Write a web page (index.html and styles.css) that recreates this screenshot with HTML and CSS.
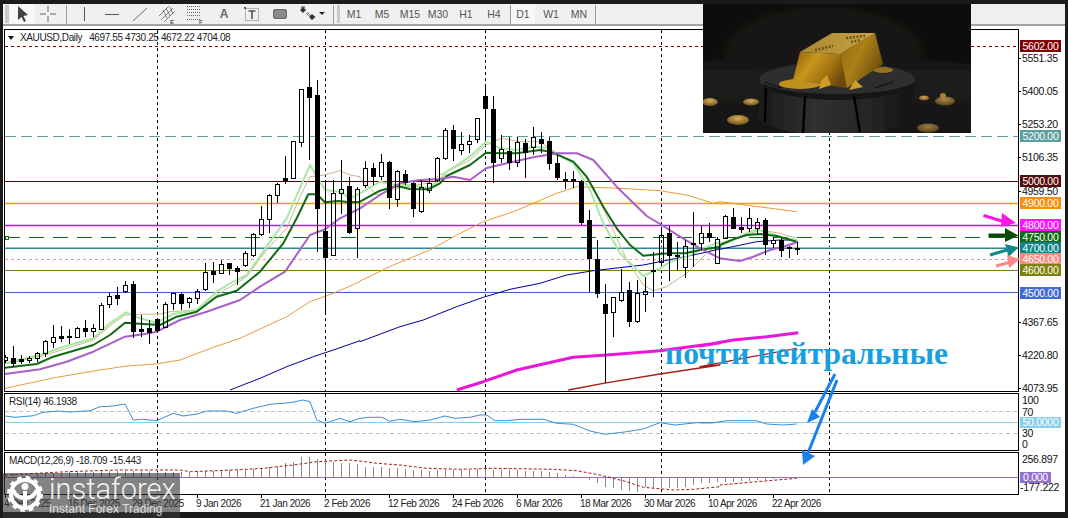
FILE: index.html
```html
<!DOCTYPE html>
<html lang="ru">
<head>
<meta charset="utf-8">
<title>XAUUSD, Daily</title>
<link rel="stylesheet" href="styles.css">
</head>
<body>
<div class="app">
  <div class="toolbar">
    <span class="grip"></span>
    <button class="tool active"><svg viewBox="0 0 20 20"><path d="M6 2 L6 16 L9.5 13 L12 18 L14 17 L11.5 12 L16 11 Z" fill="#444"/></svg></button>
    <button class="tool"><svg viewBox="0 0 20 20"><path d="M10 2V8M10 12V18M2 10H8M12 10H18" stroke="#666" fill="none"/></svg></button>
    <span class="sep"></span>
    <button class="tool"><svg viewBox="0 0 20 20"><path d="M10.5 3V17" stroke="#555" fill="none"/></svg></button>
    <button class="tool"><svg viewBox="0 0 20 20"><path d="M3 10.5H17" stroke="#555" fill="none"/></svg></button>
    <button class="tool"><svg viewBox="0 0 20 20"><path d="M3 17L17 4" stroke="#666" fill="none"/></svg></button>
    <button class="tool"><svg viewBox="0 0 20 20"><path d="M1 12L11 2M3 16L15 4M6 18L17 7M5 6L9 14M8 4L12 12M12 3L15 10" stroke="#666" stroke-width=".8" fill="none"/><text x="12" y="20" class="sub">E</text></svg></button>
    <button class="tool"><svg viewBox="0 0 20 20"><path d="M1 2.5H14M1 5.5H14M1 8.5H14M1 11.5H14M1 15.5H14" stroke="#666" stroke-dasharray="1 1" fill="none"/><text x="13" y="20" class="sub">F</text></svg></button>
    <button class="tool"><span class="letter">A</span></button>
    <button class="tool"><svg viewBox="0 0 20 20"><path d="M3.5 4.5H16.5V16.5H3.5Z" stroke="#777" stroke-dasharray="1 1" fill="none"/><rect x="2" y="3" width="2" height="2" fill="#555"/><path d="M6.5 7H13.5M10 7V15" stroke="#555" stroke-width="1.6" fill="none"/></svg></button>
    <button class="tool"><svg viewBox="0 0 20 20"><rect x="3.5" y="5.5" width="13" height="9" rx="1.5" fill="#888" stroke="#666"/></svg></button>
    <button class="tool"><svg viewBox="0 0 20 20"><path d="M5 3L8 6L5 9L2 6Z" fill="#333"/><path d="M3 3H7" stroke="#333"/><path d="M9 8L13 12M8 9L11 12" stroke="#777"/><path d="M14 10L17.500 13L14 16L11 13Z" fill="#333"/></svg></button>
    <span class="caret"></span>
    <span class="sep"></span>
    <span class="grip"></span>
    <button class="period">M1</button>
    <button class="period">M5</button>
    <button class="period">M15</button>
    <button class="period">M30</button>
    <button class="period">H1</button>
    <button class="period">H4</button>
    <span class="sep"></span>
    <button class="period active">D1</button>
    <button class="period">W1</button>
    <button class="period">MN</button>
    <span class="sep"></span>
  </div>

  <div class="workspace">
    <div class="pane pane-main">
      <div class="plot">
        <svg id="main" class="chart" width="1013" height="361" viewBox="5 30 1013 361"></svg>
        <div class="legend legend-main"><i class="legend-arrow"></i><span>XAUUSD,Daily</span><span>4697.55 4730.25 4672.22 4704.08</span></div>
      </div>
      <div class="axis">
        <span class="tag c-5602" style="top:11px">5602.00</span>
        <span class="tick" style="top:23px">5551.35</span>
        <span class="tick" style="top:56px">5400.05</span>
        <span class="tick" style="top:89px">5253.20</span>
        <span class="tag c-5200" style="top:101px">5200.00</span>
        <span class="tick" style="top:122px">5106.35</span>
        <span class="tick" style="top:156px">4959.50</span>
        <span class="tag c-5000" style="top:146px">5000.00</span>
        <span class="tag c-4900" style="top:168px">4900.00</span>
        <span class="tag c-4800" style="top:190px">4800.00</span>
        <span class="tag c-4750" style="top:202px">4750.00</span>
        <span class="tag c-4700" style="top:213px">4700.00</span>
        <span class="tag c-4650" style="top:224px">4650.00</span>
        <span class="tag c-4600" style="top:235px">4600.00</span>
        <span class="tag c-4500" style="top:258px">4500.00</span>
        <span class="tick" style="top:287px">4367.65</span>
        <span class="tick" style="top:320px">4220.80</span>
        <span class="tick" style="top:353px">4073.95</span>
      </div>
    </div>

    <div class="pane pane-rsi">
      <div class="plot">
        <svg id="rsi" class="chart" width="1013" height="56" viewBox="5 394 1013 56"></svg>
        <div class="legend legend-sub">RSI(14) 46.1938</div>
      </div>
      <div class="axis">
        <span class="plain" style="top:1px">100</span>
        <span class="plain" style="top:13px">70</span>
        <span class="tag tag-wide c-rsi" style="top:24px">50.0000</span>
        <span class="plain" style="top:34px">30</span>
        <span class="plain" style="top:45px">0</span>
      </div>
    </div>

    <div class="pane pane-macd">
      <div class="plot">
        <svg id="macd" class="chart" width="1013" height="41" viewBox="5 453 1013 41"></svg>
        <div class="legend legend-sub">MACD(12,26,9) -18.709 -15.443</div>
      </div>
      <div class="axis">
        <span class="plain" style="top:1px">256.897</span>
        <span class="tag tag-short c-macd" style="top:20px">0.000</span>
        <span class="tick tick-low" style="top:29px">-177.222</span>
      </div>
    </div>

    <div class="timeline">
      <span>4 Dec 2025</span><span>16 Dec 2025</span><span>29 Dec 2025</span><span>9 Jan 2026</span><span>21 Jan 2026</span><span>2 Feb 2026</span><span>12 Feb 2026</span><span>24 Feb 2026</span><span>6 Mar 2026</span><span>18 Mar 2026</span><span>30 Mar 2026</span><span>10 Apr 2026</span><span>22 Apr 2026</span>
    </div>
  </div>

  <svg class="annotations" width="1068" height="518" viewBox="0 0 1068 518">
    <path d="M983.500 215.500L1005 222" class="shaft s-magenta"/><path d="M1002 213L1016 223L1001 227Z" class="head h-magenta"/>
    <path d="M988.500 235.500L1007 235.500" class="shaft s-green"/><path d="M1005 228L1018.500 235.500L1005 242Z" class="head h-green"/>
    <path d="M990 255L1007 250" class="shaft s-teal"/><path d="M1005 244L1018.500 247.500L1008.500 257Z" class="head h-teal"/>
    <path d="M996 266L1011 262" class="shaft s-salmon"/><path d="M1007 255L1020 259L1009 268Z" class="head h-salmon"/>
    <path d="M835 374L815 412" class="shaft s-blue"/><path d="M807 423L812 409L820 417Z" class="head h-blue"/>
    <path d="M837 380L808 453" class="shaft s-blue"/><path d="M803 465L802 450L815 456Z" class="head h-blue"/>
  </svg>

  <div class="headline">почти нейтральные</div>

  <svg class="photo" width="268" height="129" viewBox="0 0 268 129">
    <defs>
      <radialGradient id="bg" cx="45%" cy="40%" r="75%"><stop offset="0" stop-color="#1d1c1a"/><stop offset=".6" stop-color="#0f0f0f"/><stop offset="1" stop-color="#080808"/></radialGradient>
      <linearGradient id="ground" x1="0" y1="0" x2="0" y2="1"><stop offset="0" stop-color="#0f0f0f" stop-opacity="0"/><stop offset=".25" stop-color="#201f1e"/><stop offset="1" stop-color="#131313"/></linearGradient>
      <linearGradient id="goldFront" x1="0" y1="0" x2="1" y2=".5"><stop offset="0" stop-color="#8a5f0c"/><stop offset=".4" stop-color="#c9951c"/><stop offset=".75" stop-color="#9c7010"/><stop offset="1" stop-color="#6e4c08"/></linearGradient>
      <linearGradient id="goldSide" x1="0" y1="0" x2="1" y2=".6"><stop offset="0" stop-color="#8e6810"/><stop offset=".5" stop-color="#ac8018"/><stop offset="1" stop-color="#6c4c0c"/></linearGradient>
      <linearGradient id="goldTop" x1="0" y1="0" x2="1" y2="0"><stop offset="0" stop-color="#a8862f"/><stop offset="1" stop-color="#c8a444"/></linearGradient>
      <linearGradient id="stone" x1="0" y1="0" x2="1" y2="0"><stop offset="0" stop-color="#1a1a1a"/><stop offset=".35" stop-color="#303030"/><stop offset=".7" stop-color="#262626"/><stop offset="1" stop-color="#131313"/></linearGradient>
      <radialGradient id="coin" cx="50%" cy="35%" r="65%"><stop offset="0" stop-color="#d9ad5c"/><stop offset="1" stop-color="#6e4f1c"/></radialGradient>
      <filter id="soft" x="0" y="0" width="100%" height="100%"><feGaussianBlur stdDeviation=".7"/></filter>
    </defs>
    <g filter="url(#soft)">
      <rect x="-2" y="-2" width="272" height="133" fill="url(#bg)"/>
      <rect x="-2" y="50" width="272" height="81" fill="url(#ground)"/>
      <path d="M56 76V116L70 123L100 131H170L205 118L212 76Z" fill="url(#stone)"/>
      <ellipse cx="134" cy="76" rx="78" ry="18" fill="#2e2e2e"/>
      <path d="M60 80C80 88 110 90 134 90C160 90 195 88 212 78V83C195 92 160 96 134 96C110 96 80 92 60 85Z" fill="#151515"/>
      <path d="M63 84L62 118M102 92L100 130M151 92L157 128" stroke="#050505" stroke-width="2.500" fill="none"/>
      <path d="M78 84L62 78M172 84L190 78" stroke="#111" stroke-width="1.200" fill="none"/>
      <ellipse cx="97" cy="80" rx="21" ry="5" fill="#c0901f"/>
      <ellipse cx="180" cy="66" rx="10" ry="3" fill="#96701c"/>
      <path d="M97 48L137 50L144 84L90 76Z" fill="url(#goldFront)"/>
      <path d="M137 50L172 29L180 60L144 84Z" fill="url(#goldSide)"/>
      <path d="M97 48L129 29L172 29L137 50Z" fill="url(#goldTop)"/>
      <path d="M143 34L162 32M148 38L158 36M112 46L130 42" stroke="#6e5214" stroke-width="2.500" stroke-dasharray="2 1.500" fill="none"/>
      <path d="M116 85L118 77L124 71L128 81ZM146 86L152 76L160 83Z" fill="#d09d28"/>
      <ellipse cx="7" cy="98" rx="8" ry="4" fill="url(#coin)"/>
      <ellipse cx="48" cy="98" rx="8" ry="3.500" fill="url(#coin)"/>
      <ellipse cx="35" cy="116" rx="11" ry="5" fill="url(#coin)"/>
      <ellipse cx="225" cy="124" rx="11" ry="4.500" fill="url(#coin)" opacity=".7"/>
      <ellipse cx="221" cy="94" rx="5" ry="2.500" fill="url(#coin)"/>
      <ellipse cx="242" cy="97" rx="10" ry="4.500" fill="url(#coin)" opacity=".75"/>
      <circle cx="240" cy="92" r="3" fill="#a8803a"/>
    </g>
  </svg>

  <div class="brand">
    <svg class="brand-mark" width="36" height="36" viewBox="0 0 36 36">
      <circle cx="18" cy="18" r="14" fill="none" stroke="#fff" stroke-width="4"/>
      <circle cx="18" cy="18" r="16" fill="none" stroke="#fff" stroke-width="4" stroke-dasharray="4.400 4"/>
      <circle cx="18" cy="10.500" r="3.500" fill="#fff"/>
      <path d="M18 15V31M6 14C9 21 14 22 18 22C22 22 27 21 30 14" fill="none" stroke="#fff" stroke-width="4"/>
    </svg>
    <div class="brand-text">
      <span class="brand-name">instaforex</span>
      <span class="brand-tag">Instant Forex Trading</span>
    </div>
  </div>
</div>
<script src="chart.js"></script>
</body>
</html>
```

FILE: styles.css
```css
* { box-sizing: border-box; }

html, body { margin: 0; padding: 0; background: #1b1b1b; }

.app {
  position: relative;
  display: flex;
  flex-direction: column;
  width: 1068px;
  height: 518px;
  padding: 4px 3px 6px;
  overflow: hidden;
  background: #1b1b1b;
  font-family: "Liberation Sans", Arial, sans-serif;
}

/* toolbar */
.toolbar {
  display: flex;
  align-items: stretch;
  height: 22px;
  flex: none;
  background: #f0f0f0;
  border-bottom: 2px solid #a3a3a3;
  padding-left: 1px;
}
.grip {
  width: 4px;
  margin: 1px;
  flex: none;
  background-image: radial-gradient(#9a9a9a 0.6px, transparent 0.8px);
  background-size: 2px 2px;
}
.sep + .grip { width: 3px; margin: 1px 0; }
.tool, .period {
  flex: none;
  width: 28px;
  padding: 0;
  border: 0;
  background: transparent;
  color: #555;
  font: 10.5px "Liberation Sans", Arial, sans-serif;
  display: flex;
  align-items: center;
  justify-content: center;
}
.tool.active { width: 24px; background: #f9f9f9; }
.period.active { width: 24px; background: #f7f7f7; margin-right: 2px; }
.tool svg { width: 20px; height: 20px; overflow: visible; }
.sub { font: bold 6px "Liberation Sans", sans-serif; fill: #555; }
.letter { font: bold 12px "Liberation Sans", sans-serif; color: #666; }
.sep { flex: none; width: 1px; margin: 1px 3px 0 4px; background: #9a9a9a; }
.period + .sep { margin: 1px 0 0 2px; }
.caret {
  flex: none;
  width: 0;
  height: 0;
  margin: 8px 4px 0 -3px;
  border-left: 3px solid transparent;
  border-right: 3px solid transparent;
  border-top: 3px solid #222;
}

/* chart workspace */
.workspace {
  flex: 1;
  background: #fff;
  padding: 3px 0 0 1px;
  display: flex;
  flex-direction: column;
}
.pane { display: flex; flex: none; }
.pane-main { height: 363px; margin-bottom: 1px; }
.pane-rsi { height: 58px; margin-bottom: 1px; }
.pane-macd { height: 43px; }
.plot {
  position: relative;
  width: 1015px;
  flex: none;
  border: 1px solid #000;
  background: #fff;
}
.chart { display: block; }
.legend {
  position: absolute;
  font-size: 10px;
  letter-spacing: -.38px;
  color: #222;
  white-space: nowrap;
}
.legend-main { left: 3px; top: 2px; display: flex; align-items: center; gap: 7px; }
.legend-sub { left: 4px; top: 2px; }
.legend-arrow {
  width: 0;
  height: 0;
  margin-right: -1px;
  border-left: 3.500px solid transparent;
  border-right: 3.500px solid transparent;
  border-top: 4px solid #111;
}

/* price axis */
.axis { position: relative; flex: 1; font-size: 10.5px; letter-spacing: -.3px; }
.tick, .plain, .tag {
  position: absolute;
  height: 12px;
  line-height: 12px;
  white-space: nowrap;
}
.tick { left: 3px; color: #111; }
.tick::before {
  content: "";
  position: absolute;
  left: -4px;
  top: 6px;
  width: 3px;
  height: 1px;
  background: #000;
}
.tick-low { left: 1px; }
.tick-low::before { left: -2px; width: 1px; }
.plain { left: 3px; color: #111; }
.tag {
  left: 1px;
  width: 41px;
  color: #fff;
  text-align: center;
}
.tag-wide { height: 11px; line-height: 11px; }
.tag-short { width: 31px; height: 11px; line-height: 11px; }
.c-5602 { background: #800000; }
.c-5200 { background: #5f9ea0; }
.c-5000 { background: #560c0c; }
.c-4900 { background: #fb8c0c; }
.c-4800 { background: #ff14ff; }
.c-4750 { background: #0e6a12; }
.c-4700 { background: #148088; }
.c-4650 { background: #fb8880; }
.c-4600 { background: #808010; }
.c-4500 { background: #4169d8; }
.c-rsi { background: #87ceeb; }
.c-macd { background: #9370d0; }

/* time axis */
.timeline { display: flex; height: 17px; padding-top: 2px; font-size: 10px; letter-spacing: -.45px; color: #222; }
.timeline span { position: relative; width: 64px; flex: none; line-height: 14px; white-space: nowrap; }
.timeline span::before {
  content: "";
  position: absolute;
  left: 1px;
  top: -2px;
  width: 1px;
  height: 3px;
  background: #000;
}

/* overlays */
.annotations { position: absolute; left: 0; top: 0; pointer-events: none; }
.shaft { fill: none; stroke-width: 3; }
.s-magenta { stroke: #ff14e8; }
.s-green { stroke: #0a4a06; stroke-width: 4; }
.s-teal { stroke: #138a8a; }
.s-salmon { stroke: #fa8a8a; }
.s-blue { stroke: #1a80ee; }
.h-magenta { fill: #ff14e8; }
.h-green { fill: #0a4a06; }
.h-teal { fill: #138a8a; }
.h-salmon { fill: #fa8a8a; }
.h-blue { fill: #1a80ee; }

.headline {
  position: absolute;
  left: 665px;
  top: 337px;
  font: bold 31.5px/34px "Liberation Serif", "Times New Roman", serif;
  color: #189fe0;
  white-space: nowrap;
}
.photo { position: absolute; left: 703px; top: 4px; display: block; }

.brand {
  position: absolute;
  left: 3px;
  top: 473px;
  width: 177px;
  height: 45px;
  background: rgba(55, 55, 55, .62);
  display: flex;
  gap: 6px;
  padding: 3px 0 0 4px;
  color: #fff;
}
.brand-mark { flex: none; }
.brand-text { display: flex; flex-direction: column; }
.brand-name { font: 300 29px/26px Roboto, sans-serif; color: rgba(255,255,255,.92); }
.brand-tag { font: 12px/14px "Liberation Sans", sans-serif; color: rgba(255,255,255,.75); }
```

FILE: chart.js
```js
const NS = 'http://www.w3.org/2000/svg';
const el = (parent, tag, attrs) => {
  const n = document.createElementNS(NS, tag);
  for (const k in attrs) n.setAttribute(k, attrs[k]);
  parent.appendChild(n);
  return n;
};
const pts = (ox, oy, v) => {
  const out = [];
  for (let i = 0; i < v.length; i += 2) out.push((ox + v[i] / 3).toFixed(1) + ',' + (oy + v[i + 1] / 3).toFixed(1));
  return out;
};
const main = document.getElementById('main');
const rsi = document.getElementById('rsi');
const macd = document.getElementById('macd');

/* vertical period separators */
const grid = [157.5, 325.5, 485.5, 661.5, 829.5];
[[main, 30, 391], [rsi, 394, 450], [macd, 453, 494]].forEach(([svg, a, b]) => {
  grid.forEach(x => el(svg, 'line', { x1: x, x2: x, y1: a, y2: b, stroke: '#000', 'stroke-dasharray': '3 3', 'shape-rendering': 'crispEdges' }));
});

/* horizontal levels */
const hline = (svg, y, color, dash, width) => {
  const a = { x1: 5, x2: 1018, y1: y, y2: y, stroke: color };
  if (width) a['stroke-width'] = width; else a['shape-rendering'] = 'crispEdges';
  if (dash) a['stroke-dasharray'] = dash;
  el(svg, 'line', a);
};
hline(main, 46.5, '#800000', '3 3');
hline(main, 136.5, '#5f9ea0', '11 5');
hline(main, 181.5, '#600000');
hline(main, 203.5, '#f09a10', null, 1.5);
hline(main, 225.5, '#e000d0', null, 1.5);
hline(main, 237.5, '#0e6a12', '15 9');
hline(main, 247.5, '#a8bcc4');
hline(main, 248.5, '#2a8a96');
hline(main, 259.5, '#f09090', '3 3');
hline(main, 270.5, '#7a7a10');
hline(main, 292.5, '#3f63c0');
el(main, 'rect', { x: 5.5, y: 236.5, width: 3, height: 3, fill: '#fff', stroke: '#0e6a12', 'shape-rendering': 'crispEdges' });

/* moving averages */
const series = [
  { c: '#e89c3c', w: 1, p: [...pts(0,140,[15,745,170,712,300,690,380,678,470,672,540,660,640,622,720,595,860,530,930,485,1000,460,1080,425]), ...pts(360,100,[0,543,100,495,210,450,290,405,370,365,460,335,520,310,590,280,650,260,780,265,900,272,980,285,1060,310]), ...pts(620,190,[300,35,530,65])] },
  { c: '#c8b88c', w: 1, p: [...pts(0,140,[15,672,120,650,280,600,340,550,375,525,430,523,480,522,510,515,590,510,650,465,740,410,800,330,860,265,900,170,930,110,975,105,1020,92,1050,105,1080,110]), ...pts(360,100,[0,235,50,285,110,265,200,250,240,225,330,180,378,135,425,115,480,125,540,125,590,160,640,185,700,260,750,370,800,480,850,555,880,572,920,560,980,520,1040,460,1080,430]), ...pts(620,190,[300,160,380,135,420,120,480,130,530,145])] },
  { c: '#00009c', w: 1, p: [...pts(0,140,[690,750,780,715,860,680,940,650,1000,630,1080,602]), ...pts(360,100,[0,725,120,680,190,660,290,620,370,592,450,568,540,550,620,525,700,512,850,495,1000,465,1080,447]), ...pts(620,190,[300,178,410,155,480,150,530,150])] },
  { c: '#e818d8', w: 3, p: [...pts(360,100,[290,870,370,845,470,810,640,772,740,765,900,752,1080,728]), ...pts(700,310,[0,108,100,90,200,80,295,68])] },
  { c: '#a81c1c', w: 1.3, p: [...pts(360,100,[625,870,730,850,900,822,1080,795]), ...pts(700,310,[0,170,130,145,290,115])] },
  { c: '#a8e8a4', w: 2, p: [...pts(0,140,[15,668,120,645,190,620,280,595,330,550,378,517,420,535,470,548,520,522,590,510,650,455,690,430,740,405,800,320,860,235,930,75,975,150,1020,155,1050,175]), ...pts(360,100,[0,280,60,245,110,255,160,255,205,265,240,240,260,215,330,170,378,125,420,145,470,150,520,140,560,143,590,160,640,190,690,270,730,370,780,460,850,528,900,505,930,485,980,470,1020,450,1080,425]), ...pts(620,190,[300,165,340,150,380,130,410,118,450,130,490,145,530,150])] },
  { c: '#0f6a12', w: 2, p: [...pts(0,140,[15,683,110,672,160,650,280,615,330,585,375,548,430,552,480,555,530,530,590,515,650,470,710,452,780,395,850,310,890,235,925,163,950,163,975,187,1015,183,1050,187]), ...pts(360,100,[0,305,60,272,110,258,150,267,205,268,240,250,260,228,330,195,378,158,420,160,470,160,540,150,570,155,640,185,680,230,730,320,770,385,810,435,850,467,900,462,930,460,975,460,1020,450,1080,440]), ...pts(620,190,[300,165,340,148,380,135,420,132,470,138,530,155])] },
  { c: '#a860c8', w: 2, p: [...pts(0,140,[15,702,120,688,200,665,280,635,375,590,430,583,470,575,540,540,620,515,720,480,780,440,855,395,930,285,975,268,1020,235]), ...pts(360,100,[0,325,60,285,120,250,180,240,240,237,280,230,330,240,378,205,440,190,520,172,590,160,650,160,700,180,770,260,860,348,910,378,960,410,1020,445,1080,475]), ...pts(620,190,[320,208,360,213,400,200,450,180,490,170,535,155])] }
];
series.forEach(s => el(main, 'polyline', { points: s.p.join(' '), fill: 'none', stroke: s.c, 'stroke-width': s.w, 'stroke-linejoin': 'round' }));

/* candles: [high, bodyTop, bodyBottom, low, bull?] */
const conv = (oy, scale, rows) => rows.map(r => [oy + r[0] / scale, oy + r[1] / scale, oy + r[2] / scale, oy + r[3] / scale, r[4]]);
const candles = [
  ...conv(140, 3, [
    [645,652,660,668,1],[618,655,668,680,0],[645,658,662,672,0],[648,653,660,670,1],[635,640,655,665,1],[600,603,640,650,1],
    [555,592,607,625,1],[558,589,595,605,0],[568,588,590,612,0],[560,565,592,592,1],[540,565,572,590,0],[552,565,572,590,1],
    [490,495,567,570,1],[460,467,493,505,1],[440,465,473,495,0],[422,436,453,460,1],[422,432,572,595,0],[525,568,572,590,0],
    [540,565,577,612,0],[535,538,570,575,0],[487,492,560,560,1],[458,460,490,510,1],[460,462,488,510,0],[470,473,485,505,1],
    [448,452,473,492,1],[368,397,446,452,1],[365,393,401,428,0],[360,373,400,400,1],[368,370,383,405,0],[377,383,393,435,0],
    [332,340,374,380,1],[280,283,344,352,1],[198,238,282,288,1],[162,166,236,280,1],[130,133,166,188,1],[48,115,120,132,0]
  ]),
  [141,141,178,178,1],[89,89,141.5,147,1],[47,87,97,160,0],[80,95,208,252,0],[180,231,257,313,0],
  ...conv(140, 3, [[120,158,345,345,1],[60,148,160,222,1],[110,138,275,283,0],[140,148,265,355,1]]),
  ...conv(100, 3, [
    [183,203,255,265,1],[190,205,227,255,0],[163,187,227,240,1],[183,187,290,326,0],[210,214,296,320,1],[210,223,245,255,0],
    [245,250,325,350,0],[240,262,332,340,1],[235,248,270,280,1],[170,175,240,245,1],[85,90,175,180,1],[75,90,145,182,0],
    [97,133,150,165,1],[105,122,133,160,1],[55,55,118,130,1],[-39,-12,25,120,0],[-12,27,185,248,0],[105,148,175,190,1],
    [110,152,185,210,0],[110,127,185,200,1],[118,128,157,233,0],[82,112,140,165,1],[95,118,128,160,0],[110,124,190,210,0],
    [165,190,232,240,0],[215,238,241,268,0],[213,238,241,265,0],[240,242,365,375,0],[330,360,473,575,0],[420,478,580,593,0],
    [552,612,640,850,0],[592,592,637,710,1],[507,575,600,607,1],[545,570,662,680,0],[540,580,662,670,1],[530,573,583,635,1]
  ]),
  ...conv(190, 3, [
    [185,240,242,320,1],[110,135,215,225,1],[108,130,195,272,0],[155,195,197,240,1],[150,168,230,265,1],[65,160,162,230,0],
    [108,130,160,180,1],[100,128,142,155,0],[140,148,220,220,1],[75,78,145,148,1],[55,82,115,118,0],[82,112,118,130,0],
    [55,85,113,125,1],[85,95,113,135,1],[85,90,163,195,0],[140,150,160,175,1],[145,150,180,200,0],[168,170,172,205,1],[155,173,175,195,0]
  ])
];
const g = el(main, 'g', { 'shape-rendering': 'crispEdges' });
candles.forEach((c, k) => {
  const x = 5.5 + 8 * k;
  const top = Math.round(c[1]) + 0.5;
  const bot = Math.max(Math.round(c[2]), Math.round(c[1]) + 1) + 0.5;
  el(g, 'line', { x1: x, x2: x, y1: Math.round(c[0]), y2: top, stroke: '#000' });
  el(g, 'line', { x1: x, x2: x, y1: bot, y2: Math.round(c[3]), stroke: '#000' });
  el(g, 'rect', { x: x - 2, y: top, width: 4, height: bot - top, fill: c[4] ? 'none' : '#000', stroke: '#000' });
});

/* RSI */
el(rsi, 'line', { x1: 5, x2: 1018, y1: 411.5, y2: 411.5, stroke: '#c0c0c0', 'stroke-dasharray': '4 3', 'shape-rendering': 'crispEdges' });
el(rsi, 'line', { x1: 5, x2: 1018, y1: 422.5, y2: 422.5, stroke: '#87ceeb', 'shape-rendering': 'crispEdges' });
el(rsi, 'line', { x1: 5, x2: 1018, y1: 433.5, y2: 433.5, stroke: '#c0c0c0', 'stroke-dasharray': '4 3', 'shape-rendering': 'crispEdges' });
el(rsi, 'polyline', { fill: 'none', stroke: '#3a8fd4', points: [
  ...pts(0,380,[15,108,45,112,100,107,130,97,175,93,210,96,270,92,300,80,340,78,375,72,400,120,430,118,470,122,520,100,550,108,590,102,620,93,680,93,710,100,760,85,810,73,870,68,910,60,930,65,950,120,975,130,1020,115,1050,125]),
  ...pts(360,380,[0,115,30,112,65,112,90,124,120,118,165,125,210,120,255,108,285,115,330,112,360,105,380,105,405,122,440,122,480,118,550,118,590,130,640,133,690,153,735,163,800,155,850,147,900,128,945,135,1010,128,1060,128]),
  ...pts(700,310,[0,338,40,338,80,332,170,332,200,342,250,345,290,342])
].join(' ') });

/* MACD */
const tops = [283,283,282,281,280,279,278,278,277,276,275,275,274,274,273,273,273,273,274,275,275,275,275,275,274,
  272,272,272,270,270,270,268,265,262,258,250,245,232,230,238,240,245,248,250,252,
  260,260,262,264,264,268,270,270,272,270,270,270,270,270,268,268,270,270,270,270,272,272,272,275,280,285,288,292,
  300,308,320,325,330,332,335,322,323,325,325,323,320,316,310,310,306];
const zero = 380 + 292 / 3;
tops.forEach((t, k) => {
  el(macd, 'line', { x1: 5.5 + 8 * k, x2: 5.5 + 8 * k, y1: zero, y2: 380 + t / 3, stroke: '#8a8a8a', 'shape-rendering': 'crispEdges' });
});
[5,5,4,4,3,3,2,1].forEach((h, i) => {
  el(macd, 'line', { x1: 725.5 + 8 * i, x2: 725.5 + 8 * i, y1: zero, y2: zero + h, stroke: '#8a8a8a', 'shape-rendering': 'crispEdges' });
});
el(macd, 'line', { x1: 5, x2: 1018, y1: 477.5, y2: 477.5, stroke: '#9370b8', 'shape-rendering': 'crispEdges' });
el(macd, 'polyline', { fill: 'none', stroke: '#a01c1c', 'stroke-dasharray': '3 2', points: [
  ...pts(0,380,[15,285,200,275,350,270,540,270,570,275,700,270,790,265,830,260,880,255,950,245,1050,240]),
  ...pts(360,380,[0,243,50,250,120,255,200,265,300,268,400,265,580,268,650,272,720,285,800,305,850,322,940,330,1000,328,1080,320]),
  ...pts(700,310,[60,525,170,515,290,505])
].join(' ') });
```
